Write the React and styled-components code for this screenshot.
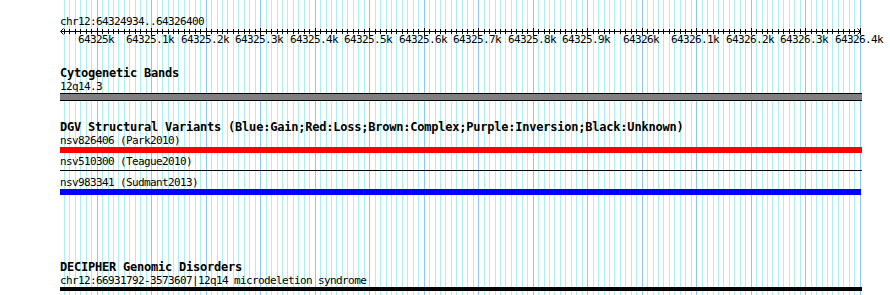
import React from "react";
import styled, { createGlobalStyle } from "styled-components";

const START = 64324934;
const END = 64326400;
const ORIGIN = 60.7; // page x of START
const SCALE = 0.545; // px per bp
const TRACK_LEFT = 60;
const TRACK_WIDTH = 802;

const bpToPage = (bp) => ORIGIN + (bp - START) * SCALE;

const ticks = [];
for (let bp = Math.ceil(START / 10) * 10; bp <= END; bp += 10) {
  ticks.push({ bp, x: Math.round(bpToPage(bp)), major: bp % 100 === 0 });
}

const fmt = (bp) => {
  const k = Math.floor(bp / 1000);
  const r = (bp % 1000) / 100;
  return `${k}${r ? "." + r : ""}k`;
};

const GlobalStyle = createGlobalStyle`
  html, body { margin: 0; padding: 0; background: #ffffff; }
  body { width: 890px; height: 295px; overflow: hidden; }
`;

const Browser = styled.div`
  position: relative;
  width: 890px;
  height: 295px;
  overflow: hidden;
  background: #ffffff;
  color: #000000;
`;

const GridLayer = styled.svg`
  position: absolute;
  left: 0;
  top: 0;
  width: 890px;
  height: 295px;
  display: block;
`;

const Tracks = styled.div`
  position: relative;
  display: flex;
  flex-direction: column;
  margin-left: ${TRACK_LEFT}px;
  width: ${TRACK_WIDTH}px;
`;

const monoText = `
  font-family: "DejaVu Sans Mono", "Liberation Mono", monospace;
  font-size: 11px;
  line-height: 13px;
  letter-spacing: -0.62px;
  white-space: nowrap;
`;

const Ruler = styled.div`
  display: flex;
  flex-direction: column;
  padding-top: 15px;
`;

const RegionLabel = styled.div`
  ${monoText}
  height: 13px;
`;

const AxisSvg = styled.svg`
  display: block;
  width: ${TRACK_WIDTH}px;
  height: 5px;
  overflow: visible;
`;

const AxisLabels = styled.div`
  position: relative;
  height: 13px;
`;

const AxisLabel = styled.span`
  ${monoText}
  position: absolute;
  top: 0;
  transform: translateX(-50%);
`;

const Track = styled.section`
  display: flex;
  flex-direction: column;
  margin-top: ${(p) => p.$top}px;
`;

const TrackTitle = styled.div`
  font-family: "DejaVu Sans Mono", "Liberation Mono", monospace;
  font-weight: bold;
  font-size: 12px;
  line-height: 13px;
  letter-spacing: -0.22px;
  white-space: nowrap;
  height: 13px;
`;

const FeatureList = styled.div`
  display: flex;
  flex-direction: column;
  gap: 2px;
`;

const Feature = styled.div`
  display: flex;
  flex-direction: column;
`;

const FeatureLabel = styled.div`
  ${monoText}
  height: 13px;
`;

const BarSlot = styled.div`
  height: 6px;
  display: flex;
  flex-direction: column;
`;

const Bar = styled.div`
  height: ${(p) => p.$h}px;
  margin-top: ${(p) => p.$offset || 0}px;
  margin-right: ${(p) => p.$trim || 0}px;
  background: ${(p) => p.$color};
`;

const Band = styled.div`
  box-sizing: border-box;
  height: 8px;
  background: #808080;
  border-top: 1px solid #000000;
  border-bottom: 1px solid #000000;
`;

const axisY = 3;

function Axis() {
  const ox = TRACK_LEFT;
  const left = 0.5;
  const right = Math.round(bpToPage(END)) - ox + 0.5;
  return (
    <AxisSvg viewBox={`0 0 ${TRACK_WIDTH} 5`} shapeRendering="crispEdges">
      <line x1={left} y1={axisY + 0.5} x2={right} y2={axisY + 0.5} stroke="#000" strokeWidth="1" />
      {ticks.map((t) => (
        <line
          key={t.bp}
          x1={t.x - ox + 0.5}
          x2={t.x - ox + 0.5}
          y1={t.major ? 0 : 1}
          y2={t.major ? 7 : 6}
          stroke="#000"
          strokeWidth="1"
        />
      ))}
      <polyline points={`${left + 3},${axisY - 2.5} ${left},${axisY + 0.5} ${left + 3},${axisY + 3.5}`} fill="none" stroke="#000" strokeWidth="1" shapeRendering="auto" />
      <polyline points={`${right - 3},${axisY - 2.5} ${right},${axisY + 0.5} ${right - 3},${axisY + 3.5}`} fill="none" stroke="#000" strokeWidth="1" shapeRendering="auto" />
    </AxisSvg>
  );
}

function Grid() {
  return (
    <GridLayer viewBox="0 0 890 295" shapeRendering="crispEdges">
      {ticks.map((t) => (
        <line
          key={t.bp}
          x1={t.x + 0.5}
          x2={t.x + 0.5}
          y1={0}
          y2={295}
          stroke={t.major ? "#8ec8ee" : "#aeeeee"}
          strokeWidth="1"
        />
      ))}
    </GridLayer>
  );
}

const dgv = [
  { id: "nsv826406 (Park2010)", color: "#ff0000", h: 6, offset: 0, trim: 0 },
  { id: "nsv510300 (Teague2010)", color: "#000000", h: 1, offset: 2, trim: 0 },
  { id: "nsv983341 (Sudmant2013)", color: "#0000ff", h: 6, offset: 0, trim: 1 },
];

export default function App() {
  const majors = ticks.filter((t) => t.major);
  return (
    <>
      <GlobalStyle />
      <Browser>
        <Grid />
        <Tracks>
          <Ruler>
            <RegionLabel>chr12:64324934..64326400</RegionLabel>
            <Axis />
            <AxisLabels>
              {majors.map((t) => (
                <AxisLabel key={t.bp} style={{ left: t.x - TRACK_LEFT - 1 }}>
                  {fmt(t.bp)}
                </AxisLabel>
              ))}
            </AxisLabels>
          </Ruler>

          <Track $top={21}>
            <TrackTitle>Cytogenetic Bands</TrackTitle>
            <FeatureLabel>12q14.3</FeatureLabel>
            <Band />
          </Track>

          <Track $top={20}>
            <TrackTitle>
              DGV Structural Variants (Blue:Gain;Red:Loss;Brown:Complex;Purple:Inversion;Black:Unknown)
            </TrackTitle>
            <FeatureList>
              {dgv.map((f) => (
                <Feature key={f.id}>
                  <FeatureLabel>{f.id}</FeatureLabel>
                  <BarSlot>
                    <Bar $h={f.h} $offset={f.offset} $trim={f.trim} $color={f.color} />
                  </BarSlot>
                </Feature>
              ))}
            </FeatureList>
          </Track>

          <Track $top={66}>
            <TrackTitle>DECIPHER Genomic Disorders</TrackTitle>
            <Feature>
              <FeatureLabel>chr12:66931792-3573607|12q14 microdeletion syndrome</FeatureLabel>
              <Bar $h={4} $color="#000000" />
            </Feature>
          </Track>
        </Tracks>
      </Browser>
    </>
  );
}
